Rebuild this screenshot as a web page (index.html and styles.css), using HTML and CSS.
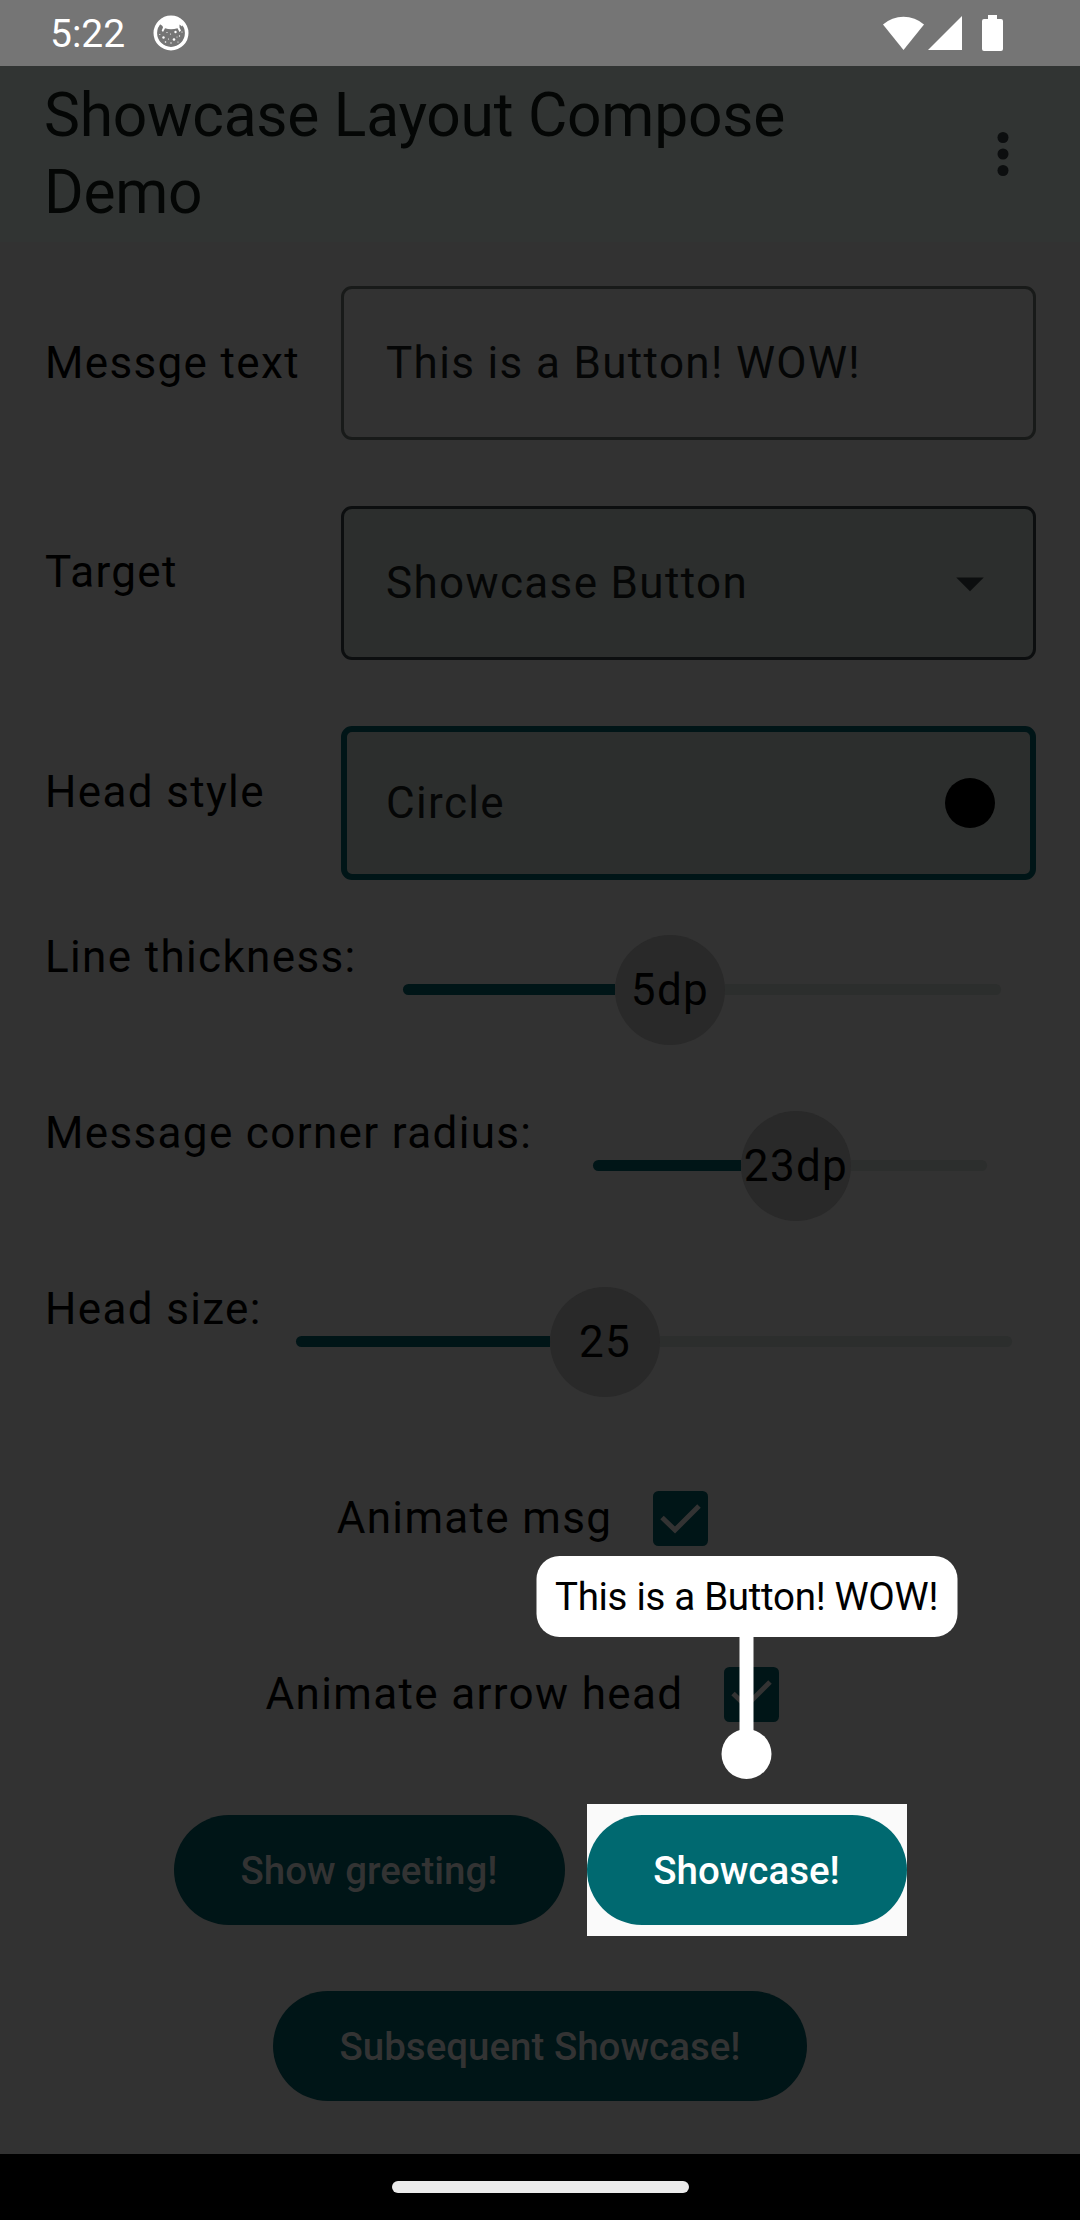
FILE: index.html
```html
<!DOCTYPE html>
<html lang="en">
<head>
<meta charset="utf-8">
<title>Showcase Layout Compose Demo</title>
<link rel="stylesheet" href="styles.css">
</head>
<body>
<div class="screen">
  <div class="status-bar">
    <span class="clock">5:22</span>
    <svg class="debug-icon" width="36" height="36" viewBox="0 0 36 36">
      <circle cx="18" cy="18" r="15.7" fill="none" stroke="#fff" stroke-width="3.6"/>
      <path d="M5 8 L12 2 H24 L31 8 L29 11.500 L26.500 9.500 L26.500 12.500 L28 15.500 L26.500 17 L24.500 13.300 Q18 15 12 13.300 L10 17 L8.700 15.500 L10 12.500 L9.500 11 L7.500 9.500 Z" fill="#fff"/>
      <g fill="#fff">
        <circle cx="22.500" cy="17" r="1.200"/><circle cx="10.500" cy="22.500" r="1.200"/><circle cx="21" cy="24.500" r="1.300"/>
        <circle cx="14" cy="17.500" r=".6"/><circle cx="17.500" cy="19" r=".6"/><circle cx="26.500" cy="21" r=".7"/>
        <circle cx="15.500" cy="24" r=".6"/><circle cx="12.500" cy="27" r=".8"/><circle cx="18" cy="28" r=".7"/>
        <circle cx="6.800" cy="19.500" r=".6"/><circle cx="25" cy="27" r=".6"/><circle cx="29" cy="17" r=".6"/><circle cx="24" cy="22" r=".5"/>
      </g>
    </svg>
    <svg class="system-icons" width="120" height="36" viewBox="0 0 120 36" fill="#fff">
      <path d="M0 9.500 A31 31 0 0 1 41 9.500 L20.500 35 Z"/>
      <path d="M45 35 L79 1 V35 Z"/>
      <path d="M105 0 h9 v4 h4 q2 0 2 2 v28 q0 2 -2 2 h-17 q-2 0 -2 -2 v-28 q0 -2 2 -2 h4 Z"/>
    </svg>
  </div>

  <header class="app-bar">
    <h1 class="title">Showcase Layout Compose Demo</h1>
    <svg class="more" width="66" height="66" viewBox="0 0 24 24"><circle cx="12" cy="6" r="2"/><circle cx="12" cy="12" r="2"/><circle cx="12" cy="18" r="2"/></svg>
  </header>

  <main class="content">
    <div class="fields">
      <div class="field-row">
        <span class="label">Messge text</span>
        <div class="field">This is a Button! WOW!</div>
      </div>
      <div class="field-row">
        <span class="label raised">Target</span>
        <div class="field filled">Showcase Button
          <svg width="66" height="66" viewBox="0 0 24 24"><path d="M7 10l5 5 5-5z" fill="#0c0e0f"/></svg>
        </div>
      </div>
      <div class="field-row">
        <span class="label raised">Head style</span>
        <div class="field filled focused">Circle<span class="head-preview"></span></div>
      </div>
    </div>

    <div class="slider-row">
      <span class="slider-label">Line thickness:</span>
      <div class="slider thickness"><span class="active"></span><span class="thumb">5dp</span><span class="rest"></span></div>
    </div>
    <div class="slider-row">
      <span class="slider-label">Message corner radius:</span>
      <div class="slider radius"><span class="active"></span><span class="thumb">23dp</span><span class="rest"></span></div>
    </div>
    <div class="slider-row">
      <span class="slider-label">Head size:</span>
      <div class="slider size"><span class="active"></span><span class="thumb">25</span><span class="rest"></span></div>
    </div>

    <div class="check-row">
      <span>Animate msg</span>
      <svg class="checkbox" width="55" height="55" viewBox="0 0 55 55"><rect width="55" height="55" rx="5.500" fill="#001517"/><path d="M9 26.500 L22 39 L46 15" fill="none" stroke="#333" stroke-width="5"/></svg>
    </div>
    <div class="check-row">
      <span>Animate arrow head</span>
      <svg class="checkbox" width="55" height="55" viewBox="0 0 55 55"><rect width="55" height="55" rx="5.500" fill="#001517"/><path d="M9 26.500 L22 39 L46 15" fill="none" stroke="#333" stroke-width="5"/></svg>
    </div>

    <div class="button-row">
      <div class="button greeting">Show greeting!</div>
      <div class="spotlight">
        <div class="button lit">Showcase!</div>
        <div class="callout">
          <div class="message">This is a Button! WOW!</div>
          <div class="stem"></div>
          <div class="head"></div>
        </div>
      </div>
    </div>
    <div class="button-row">
      <div class="button subsequent">Subsequent Showcase!</div>
    </div>
  </main>

  <div class="nav-bar"><div class="handle"></div></div>
</div>
</body>
</html>
```
FILE: styles.css
```css
* { box-sizing: border-box; }

body {
  margin: 0;
  font-family: Roboto, sans-serif;
  color: #000;
}

.screen {
  width: 1080px;
  height: 2220px;
  display: flex;
  flex-direction: column;
  background: #323232;
  font-size: 44px;
  line-height: 66px;
  letter-spacing: 1.35px;
  white-space: nowrap;
  overflow: hidden;
}

svg { display: block; flex: none; }

.status-bar {
  height: 66px;
  padding: 0 77px 0 50px;
  display: flex;
  align-items: center;
  background: #757575;
  color: #fff;
}

.clock { width: 103px; font-size: 39px; letter-spacing: 0; padding-top: 2px; }
.system-icons { margin-left: auto; }

.app-bar {
  height: 176px;
  padding: 0 44px;
  display: flex;
  align-items: center;
  justify-content: space-between;
  background: #313433;
}

.title {
  width: 840px;
  margin: 0;
  font-size: 60.5px;
  line-height: 77px;
  font-weight: 400;
  letter-spacing: -0.25px;
  white-space: normal;
  color: #040605;
}

.more { fill: #0c0e0f; }

.content { flex: 1; }

.fields {
  padding: 44px 44px 22px 45px;
  display: flex;
  flex-direction: column;
  gap: 66px;
}

.field-row { display: flex; align-items: center; height: 154px; }
.label { width: 296px; }
.raised { padding-bottom: 22px; }

.field {
  width: 695px;
  height: 154px;
  padding: 0 30px 0 42px;
  display: flex;
  align-items: center;
  justify-content: space-between;
  border: 3px solid #181a19;
  border-radius: 11px;
  color: #050606;
}

.filled { background: #2c2e2d; border-color: #0c0e0f; }
.focused { border: 6px solid #001517; padding: 0 35px 0 39px; }
.head-preview { width: 50px; height: 50px; border-radius: 50%; background: #000; }

.slider-row {
  height: 176px;
  padding-left: 45px;
  display: flex;
  align-items: center;
  justify-content: space-between;
}

.slider-label { padding-bottom: 66px; }

.slider { display: flex; align-items: center; }
.thickness { width: 598px; margin-right: 79px; }
.radius { width: 394px; margin-right: 93px; }
.size { width: 716px; margin-right: 68px; }

.active { height: 11px; margin-bottom: 1px; background: #001517; border-radius: 6px 0 0 6px; }
.thickness .active { width: 212px; }
.radius .active { width: 148px; }
.size .active { width: 254px; }
.rest { flex: 1; height: 11px; margin-bottom: 1px; background: #2c2e2d; border-radius: 0 6px 6px 0; }

.thumb {
  width: 110px;
  height: 110px;
  border-radius: 50%;
  background: #292929;
  display: flex;
  align-items: center;
  justify-content: center;
}

.check-row {
  height: 176px;
  display: flex;
  align-items: center;
  justify-content: center;
  gap: 41px;
  padding-right: 35px;
}

.button-row {
  height: 176px;
  display: flex;
  align-items: center;
  justify-content: center;
  gap: 22px;
}

.button {
  height: 110px;
  padding-top: 2px;
  border-radius: 55px;
  display: flex;
  align-items: center;
  justify-content: center;
  background: #001517;
  color: #333;
  font-size: 38.5px;
  font-weight: 500;
  letter-spacing: 0;
}

.greeting { width: 391px; }
.subsequent { width: 534px; }
.lit { width: 320px; background: #006970; color: #fff; }

.spotlight {
  position: relative;
  height: 132px;
  padding: 11px 0;
  background: #fafafa;
}

/* Callout floats above the highlighted button */
.callout {
  position: absolute;
  left: 50%;
  bottom: 157px;
  transform: translateX(-50%);
  display: flex;
  flex-direction: column;
  align-items: center;
}

.message {
  width: 421px;
  height: 81px;
  border-radius: 23px;
  background: #fff;
  display: flex;
  align-items: center;
  justify-content: center;
  font-size: 38.5px;
  letter-spacing: -0.3px;
}

.stem { width: 14px; height: 98px; background: #fff; }
.head { width: 50px; height: 50px; margin-top: -6px; border-radius: 50%; background: #fff; }

.nav-bar {
  height: 66px;
  display: flex;
  align-items: center;
  justify-content: center;
  background: #000;
}

.handle { width: 297px; height: 12px; border-radius: 6px; background: #ebebeb; }
```
